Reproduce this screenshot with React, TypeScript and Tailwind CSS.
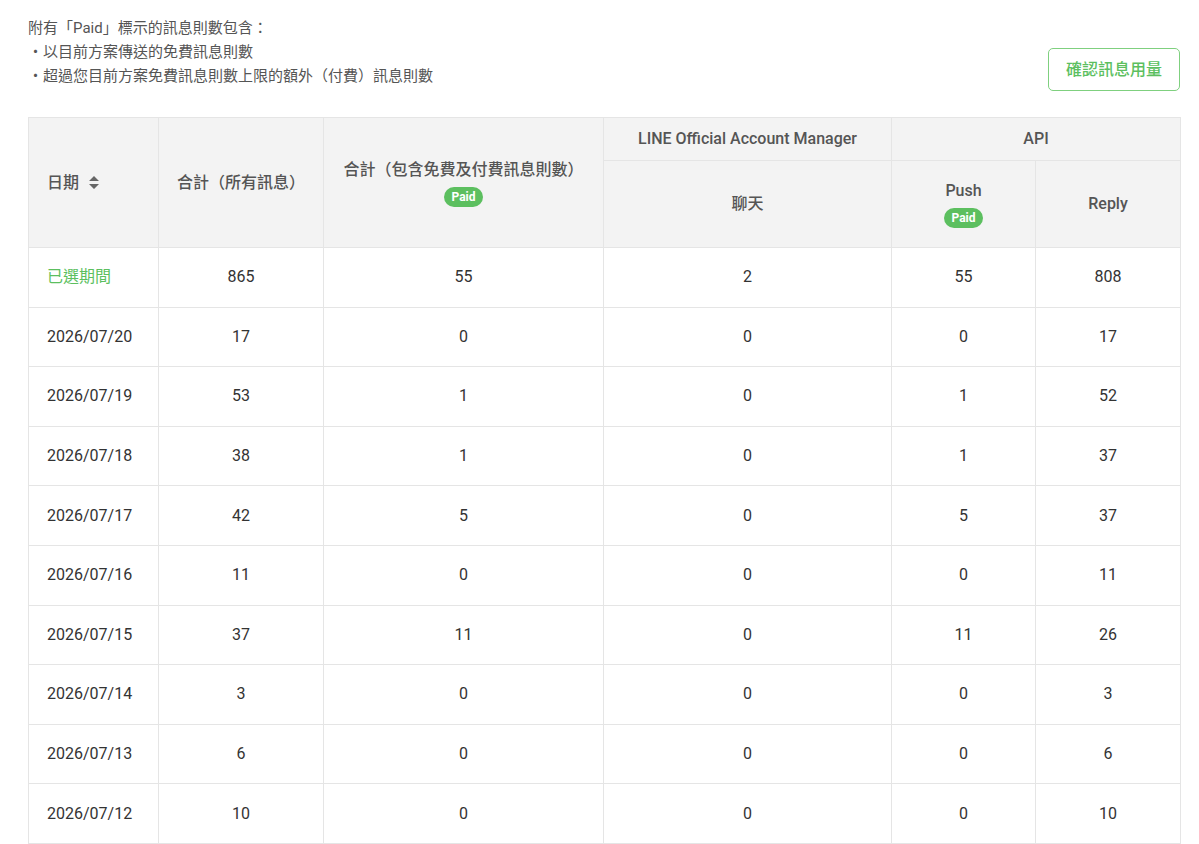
import React from "react";

const rows: [string, string, string, string, string, string][] = [
  ["已選期間", "865", "55", "2", "55", "808"],
  ["2026/07/20", "17", "0", "0", "0", "17"],
  ["2026/07/19", "53", "1", "0", "1", "52"],
  ["2026/07/18", "38", "1", "0", "1", "37"],
  ["2026/07/17", "42", "5", "0", "5", "37"],
  ["2026/07/16", "11", "0", "0", "0", "11"],
  ["2026/07/15", "37", "11", "0", "11", "26"],
  ["2026/07/14", "3", "0", "0", "0", "3"],
  ["2026/07/13", "6", "0", "0", "0", "6"],
  ["2026/07/12", "10", "0", "0", "0", "10"],
];

const Paid = () => (
  <span className="inline-block rounded-full bg-[#5cbf5f] text-white text-[12px] font-bold px-[7px] leading-[20px] h-[20px]">Paid</span>
);

export default function App() {
  const th = "border border-[#e5e5e5] bg-[#f3f3f3] text-[#555] font-medium text-[16px] text-center align-middle";
  const td = "border border-[#e5e5e5] text-[16px] text-center h-[59.6px] p-0";
  return (
    <div className="bg-white min-h-[844px] px-[28px] pt-[16px] pr-[19px] [text-spacing-trim:space-all]" style={{ fontFamily: "Roboto, 'Noto Sans CJK TC', sans-serif" }}>
      <div className="flex justify-between">
        <div className="text-[15px] leading-[24px] text-[#555]">
          <div>附有「Paid」標示的訊息則數包含：</div>
          <div>・以目前方案傳送的免費訊息則數</div>
          <div>・超過您目前方案免費訊息則數上限的額外（付費）訊息則數</div>
        </div>
        <button className="mt-[32px] w-[132px] h-[43px] border border-[#7fd07f] rounded-[5px] text-[#5cbf5f] text-[16px] font-medium">確認訊息用量</button>
      </div>
      <table className="mt-[26px] w-[1152px] border-collapse table-fixed">
        <colgroup>
          <col className="w-[130px]" />
          <col className="w-[165px]" />
          <col className="w-[280px]" />
          <col className="w-[288px]" />
          <col className="w-[144px]" />
          <col className="w-[145px]" />
        </colgroup>
        <thead>
          <tr className="h-[43px]">
            <th rowSpan={2} className={th + " text-left pl-[18px]"}>
              <span className="inline-flex items-center gap-[10px]">日期
                <svg width="10" height="13" viewBox="0 0 10 13"><path d="M5 0L10 5H0Z M5 13L0 8H10Z" fill="#666" /></svg>
              </span>
            </th>
            <th rowSpan={2} className={th}>合計（所有訊息）</th>
            <th rowSpan={2} className={th + " align-top pt-[40px]"}>
              <div>合計（包含免費及付費訊息則數）</div>
              <div className="mt-[2px]"><Paid /></div>
            </th>
            <th className={th}>LINE Official Account Manager</th>
            <th colSpan={2} className={th}>API</th>
          </tr>
          <tr className="h-[87px]">
            <th className={th}>聊天</th>
            <th className={th}>
              <div>Push</div>
              <div className="mt-[2px]"><Paid /></div>
            </th>
            <th className={th}>Reply</th>
          </tr>
        </thead>
        <tbody>
          {rows.map((r, i) => (
            <tr key={i}>
              <td className={td + " text-left pl-[18px] " + (i === 0 ? "text-[#5cbf5f]" : "text-[#333]")}>{r[0]}</td>
              {r.slice(1).map((c, j) => (
                <td key={j} className={td + " text-[#333]"}>{c}</td>
              ))}
            </tr>
          ))}
        </tbody>
      </table>
    </div>
  );
}
